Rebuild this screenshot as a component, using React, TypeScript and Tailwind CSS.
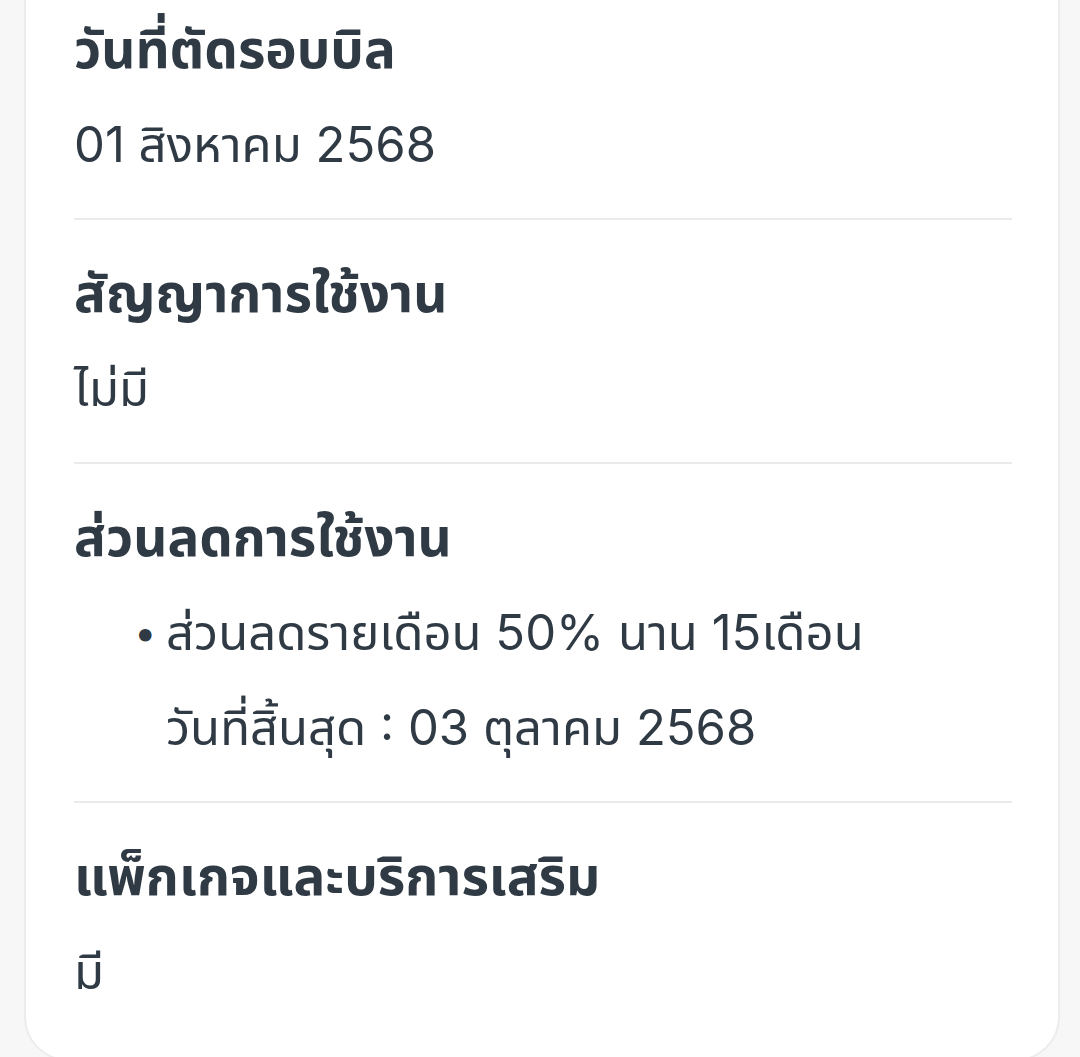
import React from "react";

const font = { fontFamily: 'Inter, "Noto Sans Thai", "Noto Sans Thai UI", "Noto Sans", sans-serif' };

const Section = ({ title, children, last = false }: any) => (
  <div className={last ? "pt-[26px] pb-[40px]" : "py-[26px] border-b-2 border-[#ebebeb]"}>
    <div className="text-[53px] font-bold leading-[95px] text-[#2f3a44]">{title}</div>
    <div className="text-[49px] leading-[95px] text-[#2f3a44]">{children}</div>
  </div>
);

const App = () => {
  return (
    <div className="min-h-[1057px] bg-[#f7f7f7] pl-[24px] pr-[20px]" style={font}>
      <div className="-mt-[30px] bg-white border-2 border-[#ececec] rounded-b-[44px] pl-[48px] pr-[46px] pt-[4px]">
        <Section title="วันที่ตัดรอบบิล">01 สิงหาคม 2568</Section>
        <Section title="สัญญาการใช้งาน">ไม่มี</Section>
        <Section title="ส่วนลดการใช้งาน">
          <div className="flex pl-[60px]">
            <span className="w-[32px] shrink-0 text-[40px]">•</span>
            <div>
              <div>ส่วนลดรายเดือน 50% นาน 15เดือน</div>
              <div>วันที่สิ้นสุด : 03 ตุลาคม 2568</div>
            </div>
          </div>
        </Section>
        <Section title="แพ็กเกจและบริการเสริม" last>
          มี
        </Section>
      </div>
    </div>
  );
};

export default App;
